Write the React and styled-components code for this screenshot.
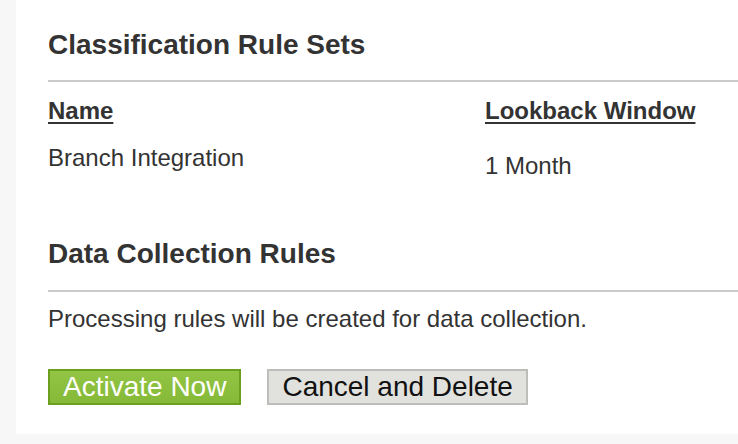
import styled, { createGlobalStyle } from "styled-components";

const Global = createGlobalStyle`
  html, body {
    margin: 0;
    padding: 0;
    background: #f7f7f7;
  }
  body {
    font-family: "Liberation Sans", Arial, Helvetica, sans-serif;
    color: #333;
  }
`;

const Page = styled.div`
  padding-left: 16px;
  height: 444px;
  overflow: hidden;
`;

const Panel = styled.main`
  background: #fff;
  height: 434px;
  padding: 29px 0 0 32px;
  box-sizing: border-box;
`;

const Heading = styled.h2`
  margin: 0;
  font-size: 28px;
  line-height: 32px;
  font-weight: bold;
  color: #333;
`;

const Rule = styled.hr`
  margin: ${(p) => p.$top || 19}px 0 0 0;
  border: none;
  height: 2px;
  background: #cbcbcb;
`;

const RuleTable = styled.div`
  display: grid;
  grid-template-columns: 437px auto;
  margin-top: 15px;
  font-size: 24px;
  line-height: 28px;
`;

const HeadCell = styled.div`
  font-weight: bold;
  text-decoration: underline;
  text-underline-offset: 3px;
`;

const Cell = styled.div`
  margin-top: ${(p) => p.$offset || 19}px;
`;

const Second = styled.section`
  margin-top: 58px;
`;

const Note = styled.p`
  margin: 13px 0 0 0;
  font-size: 24px;
  line-height: 28px;
`;

const Actions = styled.div`
  display: flex;
  gap: 26px;
  margin-top: 36px;
`;

const Button = styled.button`
  height: 36px;
  padding: 0 13px;
  font-family: "Liberation Sans", Arial, Helvetica, sans-serif;
  font-size: 28px;
  line-height: 32px;
  border: 2px solid ${(p) => (p.$primary ? "#6ba01d" : "#bdbdbb")};
  background: ${(p) =>
    p.$primary ? "linear-gradient(#93c545, #85b937)" : "#e1e1de"};
  color: ${(p) => (p.$primary ? "#fff" : "#111")};
  border-radius: 0;
  cursor: pointer;
`;

export default function App() {
  return (
    <>
      <Global />
      <Page>
        <Panel>
          <section>
            <Heading>Classification Rule Sets</Heading>
            <Rule />
            <RuleTable>
              <HeadCell>Name</HeadCell>
              <HeadCell>Lookback Window</HeadCell>
              <Cell>Branch Integration</Cell>
              <Cell $offset={27}>1 Month</Cell>
            </RuleTable>
          </section>
          <Second>
            <Heading>Data Collection Rules</Heading>
            <Rule $top={20} />
            <Note>Processing rules will be created for data collection.</Note>
          </Second>
          <Actions>
            <Button $primary>Activate Now</Button>
            <Button>Cancel and Delete</Button>
          </Actions>
        </Panel>
      </Page>
    </>
  );
}
